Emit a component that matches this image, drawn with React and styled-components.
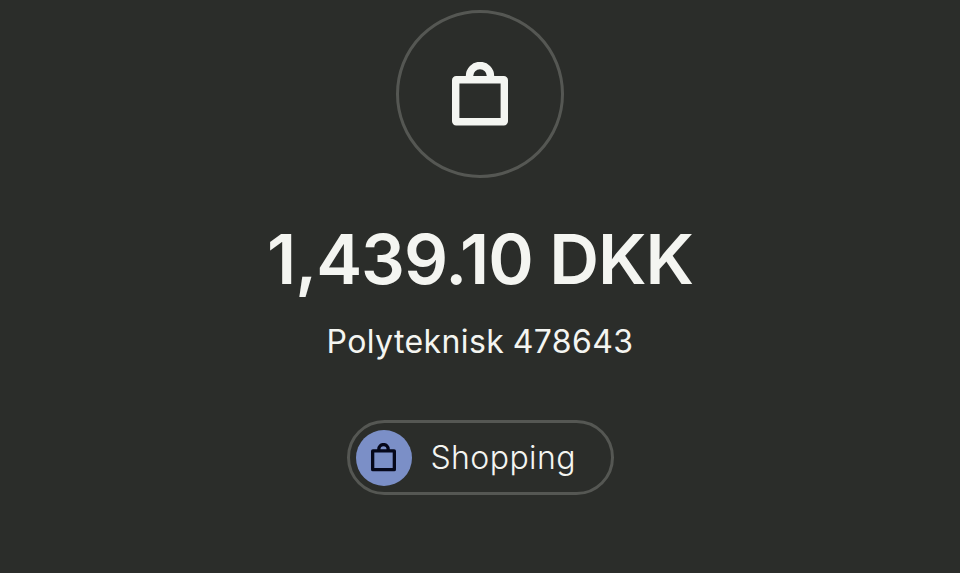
import styled, { createGlobalStyle } from "styled-components"

const GlobalStyle = createGlobalStyle`
    html, body {
        margin: 0;
        padding: 0;
        background: #2b2d2a;
    }
`

const BagIcon = ({ size, color }) => (
    <svg width={size} height={size * 64 / 56} viewBox="0 0 56 64" fill="none" stroke={color} strokeWidth="7.4" strokeLinejoin="round">
        <rect x="3.7" y="17.7" width="48.6" height="42.1" rx="0.5" />
        <path d="M17.5 17.5 V14 A10.5 10.5 0 0 1 38.5 14 V17.5" />
    </svg>
)

const App = () => {
    return (
        <Page>
            <GlobalStyle />
            <IconCircle>
                <BagIcon size={56} color="#f4f5f1" />
            </IconCircle>
            <Amount>1,439.10 DKK</Amount>
            <Merchant>Polyteknisk 478643</Merchant>
            <CategoryPill>
                <CategoryBadge>
                    <BagIcon size={25} color="#05071a" />
                </CategoryBadge>
                <CategoryName>Shopping</CategoryName>
            </CategoryPill>
        </Page>
    )
}

const Page = styled.div`
    width: 960px;
    height: 573px;
    box-sizing: border-box;
    padding-top: 10px;
    overflow: hidden;
    background: #2b2d2a;
    display: flex;
    flex-direction: column;
    align-items: center;
    font-family: Inter, "Liberation Sans", sans-serif;
    color: #f4f5f1;
`

const IconCircle = styled.div`
    width: 168px;
    height: 168px;
    box-sizing: border-box;
    border: 3px solid #555753;
    border-radius: 50%;
    display: flex;
    align-items: center;
    justify-content: center;
`

const Amount = styled.div`
    margin-top: 41px;
    font-size: 69px;
    line-height: 80px;
    font-weight: 600;
    letter-spacing: -1px;
`

const Merchant = styled.div`
    margin-top: 23px;
    font-size: 32px;
    line-height: 40px;
    font-weight: 400;
    letter-spacing: 0.4px;
    word-spacing: -1px;
`

const CategoryPill = styled.div`
    margin-top: 58px;
    width: 267px;
    height: 75px;
    box-sizing: border-box;
    border: 3px solid #555753;
    border-radius: 38px;
    padding-left: 6px;
    display: flex;
    align-items: center;
    gap: 19px;
`

const CategoryBadge = styled.div`
    width: 56px;
    height: 56px;
    border-radius: 50%;
    background: #7b8fc7;
    display: flex;
    align-items: center;
    justify-content: center;
`

const CategoryName = styled.div`
    font-size: 32px;
    line-height: 40px;
    font-weight: 300;
    letter-spacing: 0.4px;
`

export default App
